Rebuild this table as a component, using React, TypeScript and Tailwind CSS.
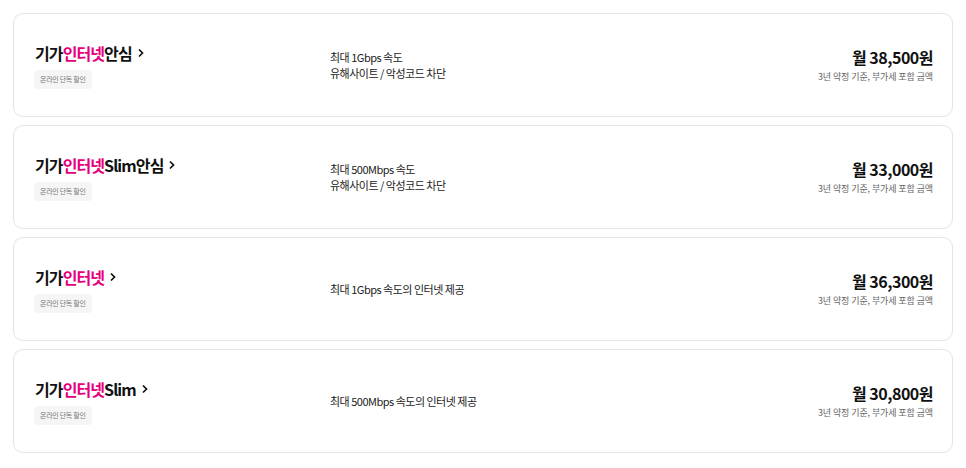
const plans = [
  { pre: '기가', pink: '인터넷', post: '안심', desc: ['최대 1Gbps 속도', '유해사이트 / 악성코드 차단'], price: '38,500' },
  { pre: '기가', pink: '인터넷', post: 'Slim안심', desc: ['최대 500Mbps 속도', '유해사이트 / 악성코드 차단'], price: '33,000' },
  { pre: '기가', pink: '인터넷', post: '', desc: ['최대 1Gbps 속도의 인터넷 제공'], price: '36,300' },
  { pre: '기가', pink: '인터넷', post: 'Slim', desc: ['최대 500Mbps 속도의 인터넷 제공'], price: '30,800' },
];

export default function App() {
  return (
    <div
      className="w-[966px] h-[468px] bg-white px-[13px] pt-[13px] flex flex-col gap-[8px]"
      style={{ fontFamily: '"Noto Sans CJK KR", "Noto Sans", sans-serif' }}
    >
      {plans.map((p) => (
        <div
          key={p.post + p.price}
          className="h-[104px] border border-[#e4e4e4] rounded-[10px] flex items-center pl-[20px] pr-[19px]"
        >
          <div className="w-[295px] flex flex-col items-start">
            <div className="flex items-center text-[16px] font-bold leading-[22px] text-[#111] tracking-[-0.9px] ml-[1px]">
              <span>{p.pre}</span>
              <span className="text-[#e6007e]">{p.pink}</span>
              <span>{p.post}</span>
              <svg width="8" height="10" viewBox="0 0 8 10" className="ml-[5px] mt-[1px]">
                <path d="M2 1.5 L5.5 5 L2 8.5" fill="none" stroke="#111" strokeWidth="1.7" />
              </svg>
            </div>
            <div className="mt-[6px] h-[19px] px-[6px] rounded-[4px] bg-[#f5f5f5] text-[7px] text-[#777] flex items-center tracking-[-0.3px]">
              온라인 단독 할인
            </div>
          </div>
          <div className="flex-1 flex flex-col text-[11px] leading-[16px] text-[#222] tracking-[-0.5px] pl-[1px]">
            {p.desc.map((d) => (
              <span key={d}>{d}</span>
            ))}
          </div>
          <div className="flex flex-col items-end">
            <span className="text-[16px] font-bold leading-[22px] text-[#111] tracking-[-0.5px]">월 {p.price}원</span>
            <span className="text-[9px] text-[#666] leading-[14px] mt-[2px] tracking-[-0.1px]">3년 약정 기준, 부가세 포함 금액</span>
          </div>
        </div>
      ))}
    </div>
  );
}
